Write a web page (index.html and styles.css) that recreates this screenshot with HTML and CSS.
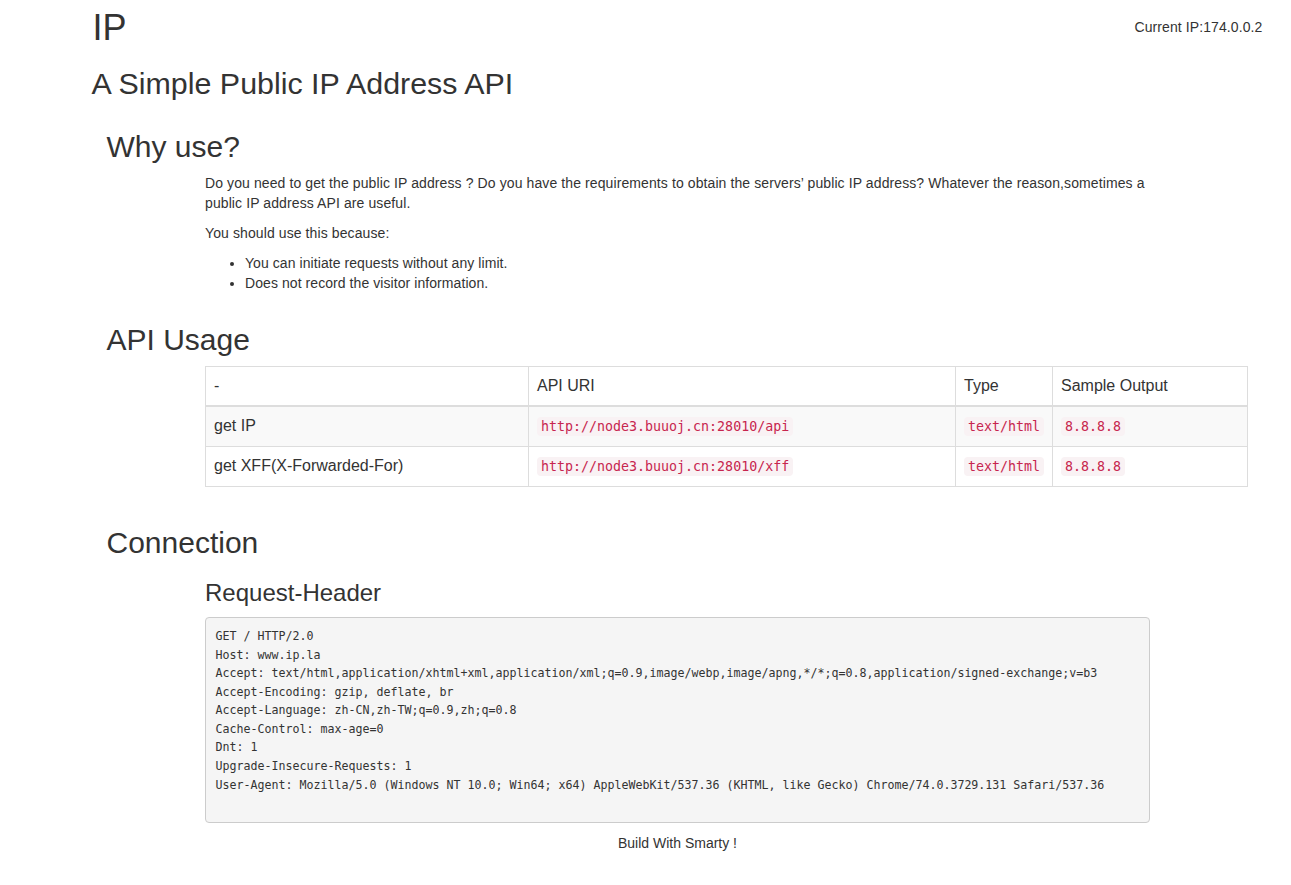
FILE: index.html
```html
<!DOCTYPE html>
<html lang="en">
<head>
<meta charset="utf-8">
<title>IP</title>
<link rel="stylesheet" href="styles.css">
</head>
<body>
<div class="page">
  <header class="top">
    <h1 class="brand">IP</h1>
    <div class="current">Current IP:174.0.0.2</div>
  </header>
  <h2 class="subtitle">A Simple Public IP Address API</h2>

  <section class="sec">
    <h2 class="sec-title">Why use?</h2>
    <div class="col10">
      <p>Do you need to get the public IP address ? Do you have the requirements to obtain the servers’ public IP address? Whatever the reason,sometimes a public IP address API are useful.</p>
      <p>You should use this because:</p>
      <ul>
        <li>You can initiate requests without any limit.</li>
        <li>Does not record the visitor information.</li>
      </ul>
    </div>
  </section>

  <section class="sec">
    <h2 class="sec-title">API Usage</h2>
    <div class="col11">
      <table class="api">
        <thead>
          <tr>
            <th class="c1">-</th>
            <th class="c2">API URI</th>
            <th class="c3">Type</th>
            <th class="c4">Sample Output</th>
          </tr>
        </thead>
        <tbody>
          <tr class="odd">
            <td>get IP</td>
            <td><code>http://node3.buuoj.cn:28010/api</code></td>
            <td><code>text/html</code></td>
            <td><code>8.8.8.8</code></td>
          </tr>
          <tr>
            <td>get XFF(X-Forwarded-For)</td>
            <td><code>http://node3.buuoj.cn:28010/xff</code></td>
            <td><code>text/html</code></td>
            <td><code>8.8.8.8</code></td>
          </tr>
        </tbody>
      </table>
    </div>
  </section>

  <section class="sec">
    <h2 class="sec-title">Connection</h2>
    <div class="col10">
      <h3 class="sub-title">Request-Header</h3>
<pre class="headers">GET / HTTP/2.0
Host: www.ip.la
Accept: text/html,application/xhtml+xml,application/xml;q=0.9,image/webp,image/apng,*/*;q=0.8,application/signed-exchange;v=b3
Accept-Encoding: gzip, deflate, br
Accept-Language: zh-CN,zh-TW;q=0.9,zh;q=0.8
Cache-Control: max-age=0
Dnt: 1
Upgrade-Insecure-Requests: 1
User-Agent: Mozilla/5.0 (Windows NT 10.0; Win64; x64) AppleWebKit/537.36 (KHTML, like Gecko) Chrome/74.0.3729.131 Safari/537.36</pre>
      <div class="footer">Build With Smarty !</div>
    </div>
  </section>
</div>
</body>
</html>
```
FILE: styles.css
```css
* {
  box-sizing: border-box;
}

html, body {
  margin: 0;
  padding: 0;
  background: #fff;
}

body {
  font-family: "Liberation Sans", Arial, Helvetica, sans-serif;
  font-size: 14px;
  line-height: 1.42857143;
  color: #333;
}

.page {
  display: flex;
  flex-direction: column;
  width: 1170px;
  margin-left: 92.5px;
  padding-top: 8px;
}

.top {
  display: flex;
  justify-content: space-between;
  align-items: flex-start;
}

.brand {
  margin: 0;
  font-size: 36px;
  font-weight: 500;
  line-height: 39.6px;
}

.current {
  padding-top: 9px;
  line-height: 20px;
  letter-spacing: 0.1px;
}

h2, h3 {
  font-weight: 500;
  line-height: 1.1;
}

.subtitle {
  margin: 19px 0 10px -1px;
  font-size: 30.4px;
  line-height: 33px;
}

.sec {
  display: flex;
  flex-direction: column;
}

.sec-title {
  margin: 20px 0 10px;
  padding-left: 14px;
  font-size: 30px;
}

.col10 {
  width: 945px;
  margin-left: 112.5px;
}

.col11 {
  width: 1042.5px;
  margin-left: 112.5px;
}

.col10 p {
  margin: 0 0 10px;
  letter-spacing: 0.1px;
}

.col10 ul {
  margin: 0 0 10px;
  padding-left: 40px;
  letter-spacing: 0.07px;
}

.api {
  width: 100%;
  margin-bottom: 19px;
  border-collapse: collapse;
  border-spacing: 0;
  border: 1px solid #ddd;
  font-size: 16px;
  line-height: 1.42857143;
  table-layout: fixed;
}

.api th,
.api td {
  padding: 8px;
  border: 1px solid #ddd;
  text-align: left;
  vertical-align: top;
  font-weight: 400;
}

.api thead th {
  border-bottom-width: 2px;
  vertical-align: bottom;
}

.api .c1 { width: 323px; }
.api .c2 { width: 427px; }
.api .c3 { width: 97px; }

.api tr.odd {
  background: #f9f9f9;
}

.api code {
  font-family: "DejaVu Sans Mono", "Liberation Mono", monospace;
  font-size: 13.3px;
  padding: 2px 4px;
  color: #c7254e;
  background: #f9f2f4;
  border-radius: 4px;
  white-space: nowrap;
}

.sub-title {
  margin: 11px 0 10px;
  font-size: 24px;
}

.headers {
  margin: 0 0 10px;
  padding: 9.5px 9.5px 27.5px;
  font-family: "DejaVu Sans Mono", "Liberation Mono", monospace;
  font-size: 11.63px;
  line-height: 18.57px;
  color: #333;
  background: #f5f5f5;
  border: 1px solid #ccc;
  border-radius: 4px;
  white-space: pre;
  overflow: hidden;
}

.footer {
  text-align: center;
  line-height: 20px;
}
```
